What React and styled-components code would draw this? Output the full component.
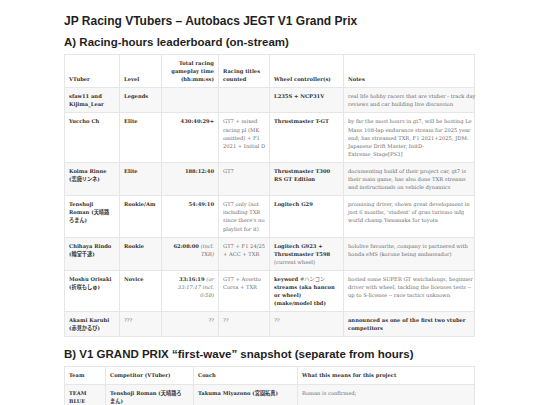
import React from 'react';
import styled, { createGlobalStyle } from 'styled-components';

const GlobalStyle = createGlobalStyle`
  html, body {
    margin: 0;
    padding: 0;
    background: #ffffff;
  }
`;

const Page = styled.div`
  width: 540px;
  height: 405px;
  overflow: hidden;
  box-sizing: border-box;
  padding: 14px 0 0 64px;
  font-family: 'Liberation Sans', Arial, sans-serif;
  color: #1f1f1f;
`;

const Title = styled.h1`
  margin: 0;
  font-size: 12px;
  line-height: 14px;
  font-weight: 700;
`;

const SectionTitle = styled.h2`
  margin: ${(p) => (p.$first ? '7px' : '10px')} 0 5px;
  font-size: 11.5px;
  line-height: 14px;
  font-weight: 700;
`;

const Table = styled.table`
  width: 410px;
  border-collapse: collapse;
  table-layout: fixed;
  font-family: 'DejaVu Serif', Georgia, 'Noto Sans CJK JP', serif;
  font-size: 5.2px;
  line-height: 8.1px;
  color: #6b6b6b;
`;

const Col = styled.col`
  width: ${(p) => p.$w}px;
`;

const Row = styled.tr`
  background: ${(p) => (p.$shade ? '#f7f7f7' : '#ffffff')};
`;

const HeadCell = styled.th`
  padding: 4px;
  border: 1px solid #e6e6e6;
  text-align: ${(p) => (p.$right ? 'right' : 'left')};
  vertical-align: bottom;
  font-weight: 700;
  color: #333333;
  white-space: nowrap;
`;

const Cell = styled.td`
  padding: 4px;
  border: 1px solid #e6e6e6;
  text-align: ${(p) => (p.$right ? 'right' : 'left')};
  vertical-align: top;
  font-weight: ${(p) => (p.$bold ? 700 : 400)};
  color: ${(p) => (p.$bold ? '#333333' : '#6b6b6b')};
  white-space: nowrap;
`;

const Plain = styled.span`
  font-weight: 400;
  color: #6b6b6b;
`;

const Note = styled.span`
  font-weight: 400;
  font-style: italic;
  color: #6b6b6b;
`;

// join an array of lines with <br />, keeping each line as written
const lines = (list) =>
  list.flatMap((line, i) => (i ? [<br key={i} />, line] : [line]));

const boardCols = [55, 42, 57, 51, 74, 131];

const boardHead = [
  { text: ['VTuber'] },
  { text: ['Level'] },
  { text: ['Total racing', 'gameplay time', '(hh:mm:ss)'], right: true },
  { text: ['Racing titles', 'counted'] },
  { text: ['Wheel controller(s)'] },
  { text: ['Notes'] },
];

const boardRows = [
  {
    name: ['sfaw11 and', 'Kijima_Lear'],
    level: ['Legends'],
    time: [''],
    titles: [''],
    wheel: ['L235S + NCP31V'],
    notes: [
      'real life hobby racers that are vtuber - track day',
      'reviews and car building live discussion',
    ],
  },
  {
    name: ['Yuccho Ch'],
    level: ['Elite'],
    time: ['430:40:29+'],
    titles: ['GT7 + mixed', 'racing pl (MK', 'omitted) + F1', '2021 + Initial D'],
    wheel: ['Thrustmaster T-GT'],
    notes: [
      'by far the most hours in gt7, will be hosting Le',
      'Mans 108-lap endurance stream for 2025 year',
      'end; has streamed TXR, F1 2021+2025, JDM:',
      'Japanese Drift Master, InitD-',
      'Extreme_Stage[PS3]',
    ],
  },
  {
    name: ['Koima Rinne', '(恋魔リンネ)'],
    level: ['Elite'],
    time: ['188:12:40'],
    titles: ['GT7'],
    wheel: ['Thrustmaster T300', 'RS GT Edition'],
    notes: [
      'documenting build of their project car, gt7 is',
      'their main game, has also done TXR streams',
      'and instructionals on vehicle dynamics',
    ],
  },
  {
    name: ['Tenshoji', 'Roman (天晴路', 'ろまん)'],
    level: ['Rookie/Am'],
    time: ['54:49:10'],
    titles: ['GT7 only (not', 'including TXR', "since there's no", 'playlist for it)'],
    wheel: ['Logitech G29'],
    notes: [
      'promising driver, shown great development in',
      "just 6 months, 'student' of gran turismo mfg",
      'world champ Yamanaka for toyota',
    ],
  },
  {
    name: ['Chihaya Rindo', '(輪堂千速)'],
    level: ['Rookie'],
    time: [
      <React.Fragment key="t">62:08:00 <Note>(incl.</Note></React.Fragment>,
      <Note key="n">TXR)</Note>,
    ],
    titles: ['GT7 + F1 24/25', '+ ACC + TXR'],
    wheel: ['Logitech G923 +', 'Thrustmaster T598', <Plain key="p">(current wheel)</Plain>],
    notes: [
      'hololive favourite, company is partnered with',
      'honda eMS (korone being ambassador)',
    ],
  },
  {
    name: ['Moshu Orisaki', '(折咲もしゅ)'],
    level: ['Novice'],
    time: [
      <React.Fragment key="t">33:16:19 <Note>(or</Note></React.Fragment>,
      <Note key="a">33:17:17 incl.</Note>,
      <Note key="b">0:58)</Note>,
    ],
    titles: ['GT7 + Assetto', 'Corsa + TXR'],
    wheel: [
      <React.Fragment key="k">keyword <Plain>#ハンコン</Plain></React.Fragment>,
      'streams (aka hancon',
      'or wheel)',
      '(make/model tbd)',
    ],
    notes: [
      'hosted some SUPER GT watchalongs, beginner',
      'driver with wheel, tackling the licenses tests --',
      'up to S-license -- race tactics unknown',
    ],
  },
  {
    name: ['Akami Karubi', '(赤見かるび)'],
    level: [<Plain key="l">???</Plain>],
    time: [<Plain key="t">??</Plain>],
    titles: ['??'],
    wheel: [<Plain key="w">??</Plain>],
    notes: ['announced as one of the first two vtuber', 'competitors'],
    strongNotes: true,
  },
];

const teamCols = [41, 88, 104, 177];

export default function App() {
  return (
    <Page>
      <GlobalStyle />
      <Title>JP Racing VTubers – Autobacs JEGT V1 Grand Prix</Title>

      <SectionTitle $first>A) Racing-hours leaderboard (on-stream)</SectionTitle>
      <Table>
        <colgroup>
          {boardCols.map((w, i) => (
            <Col key={i} $w={w} />
          ))}
        </colgroup>
        <thead>
          <Row>
            {boardHead.map((h) => (
              <HeadCell key={h.text[0]} $right={h.right}>
                {lines(h.text)}
              </HeadCell>
            ))}
          </Row>
        </thead>
        <tbody>
          {boardRows.map((r, i) => (
            <Row key={i} $shade={i % 2 === 0}>
              <Cell $bold>{lines(r.name)}</Cell>
              <Cell $bold>{lines(r.level)}</Cell>
              <Cell $bold $right>{lines(r.time)}</Cell>
              <Cell>{lines(r.titles)}</Cell>
              <Cell $bold>{lines(r.wheel)}</Cell>
              <Cell $bold={r.strongNotes}>{lines(r.notes)}</Cell>
            </Row>
          ))}
        </tbody>
      </Table>

      <SectionTitle>B) V1 GRAND PRIX “first-wave” snapshot (separate from hours)</SectionTitle>
      <Table>
        <colgroup>
          {teamCols.map((w, i) => (
            <Col key={i} $w={w} />
          ))}
        </colgroup>
        <thead>
          <Row>
            <HeadCell>Team</HeadCell>
            <HeadCell>Competitor (VTuber)</HeadCell>
            <HeadCell>Coach</HeadCell>
            <HeadCell>What this means for this project</HeadCell>
          </Row>
        </thead>
        <tbody>
          <Row $shade>
            <Cell $bold>{lines(['TEAM', 'BLUE'])}</Cell>
            <Cell $bold>{lines(['Tenshoji Roman (天晴路ろ', 'まん)'])}</Cell>
            <Cell $bold>Takuma Miyazono (宮園拓真)</Cell>
            <Cell>Roman is confirmed;</Cell>
          </Row>
        </tbody>
      </Table>
    </Page>
  );
}
